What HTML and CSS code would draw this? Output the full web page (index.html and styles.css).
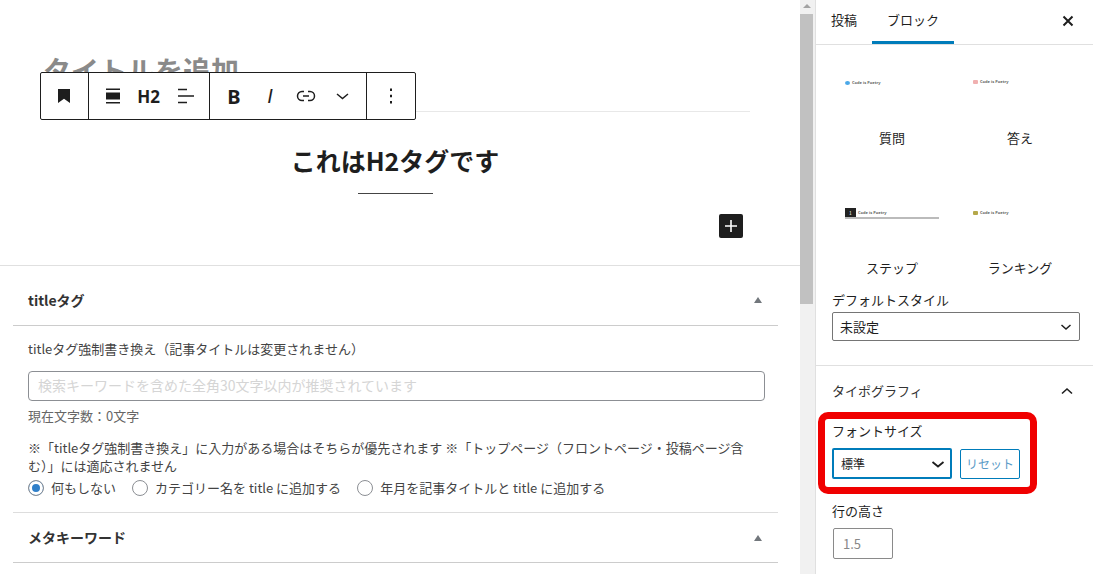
FILE: index.html
```html
<html>
<head>
  <title>投稿を編集</title>
  <link rel="stylesheet" href="styles.css">
</head>
<body>
  <div class="app">
    <div class="main">
      <div class="editor">
        <div class="post-title">タイトルを追加</div>
        <div class="toolbar">
          <div class="tool-group group-block">
            <svg width="24" height="24" viewBox="0 0 24 24"><path d="M6 5h12v14l-6-4.200L6 19z" fill="#1e1e1e"/></svg>
          </div>
          <div class="tool-group group-heading">
            <svg width="24" height="24" viewBox="0 0 24 24"><path d="M5 4.500h14V6H5zM5 8.500h14v7H5zM5 18h14v1.500H5z" fill="#1e1e1e"/></svg>
            <span class="tool-h2">H2</span>
            <svg width="24" height="24" viewBox="0 0 24 24"><path d="M4 4.800h9v1.500H4zM4 11.300h16v1.500H4zM4 17.800h9v1.500H4z" fill="#1e1e1e"/></svg>
          </div>
          <div class="tool-group group-format">
            <span class="tool-bold">B</span>
            <span class="tool-italic">I</span>
            <svg width="24" height="24" viewBox="0 0 24 24"><path d="M10 7.500H8a4.500 4.500 0 0 0 0 9h2M14 7.500h2a4.500 4.500 0 0 1 0 9h-2M9 12h6" fill="none" stroke="#1e1e1e" stroke-width="1.500"/></svg>
            <svg width="24" height="24" viewBox="0 0 24 24"><path d="M7 10l5.500 4.500L18 10" fill="none" stroke="#1e1e1e" stroke-width="1.500"/></svg>
          </div>
          <div class="tool-group group-more">
            <svg width="24" height="24" viewBox="0 0 24 24"><path d="M11 4.500h2v2.400h-2zM11 10.800h2v2.400h-2zM11 17.100h2v2.400h-2z" fill="#1e1e1e"/></svg>
          </div>
        </div>
        <div class="heading-block">
          <h2>これはH2タグです</h2>
          <div class="heading-rule"></div>
        </div>
        <div class="add-row">
          <div class="add-btn">
            <svg width="24" height="24" viewBox="0 0 24 24"><path d="M11.200 6h1.600v5.200H18v1.600h-5.200V18h-1.600v-5.200H6v-1.600h5.200z" fill="#fff"/></svg>
          </div>
        </div>
      </div>

      <div class="metabox">
        <div class="meta-head meta-head-1">
          <span class="meta-title">titleタグ</span>
          <span class="meta-arrow"></span>
        </div>
        <div class="meta-body">
          <div class="meta-label">titleタグ強制書き換え（記事タイトルは変更されません）</div>
          <div class="meta-input">検索キーワードを含めた全角30文字以内が推奨されています</div>
          <div class="meta-count">現在文字数：0文字</div>
          <div class="meta-note">※「titleタグ強制書き換え」に入力がある場合はそちらが優先されます ※「トップページ（フロントページ・投稿ページ含む）」には適応されません</div>
          <div class="radio-row">
            <span class="radio-item"><span class="radio checked"></span>何もしない</span>
            <span class="radio-item"><span class="radio"></span>カテゴリー名を title に追加する</span>
            <span class="radio-item"><span class="radio"></span>年月を記事タイトルと title に追加する</span>
          </div>
        </div>
        <div class="meta-head meta-head-2">
          <span class="meta-title">メタキーワード</span>
          <span class="meta-arrow"></span>
        </div>
      </div>
    </div>

    <div class="scrollbar">
      <div class="scroll-btn"></div>
      <div class="scroll-thumb"></div>
    </div>

    <div class="sidebar">
      <div class="tabs">
        <span class="tab tab-post">投稿</span>
        <span class="tab tab-block">ブロック</span>
        <svg class="tab-close" width="24" height="24" viewBox="0 0 24 24"><path d="M7.500 7.500l9 9M16.500 7.500l-9 9" fill="none" stroke="#1e1e1e" stroke-width="2"/></svg>
      </div>

      <div class="style-panel">
        <div class="style-grid">
          <div class="style-item">
            <div class="style-preview"><span class="mini-icon mini-blue"></span><span class="mini-text">Code is Poetry</span></div>
            <div class="style-name">質問</div>
          </div>
          <div class="style-item">
            <div class="style-preview preview-a"><span class="mini-icon mini-pink"></span><span class="mini-text">Code is Poetry</span></div>
            <div class="style-name">答え</div>
          </div>
          <div class="style-item">
            <div class="style-preview preview-step"><span class="mini-step">1</span><span class="mini-text">Code is Poetry</span></div>
            <div class="style-name">ステップ</div>
          </div>
          <div class="style-item">
            <div class="style-preview preview-rank"><span class="mini-icon mini-gold"></span><span class="mini-text">Code is Poetry</span></div>
            <div class="style-name">ランキング</div>
          </div>
        </div>
        <div class="field-label">デフォルトスタイル</div>
        <div class="select select-default">
          <span>未設定</span>
          <svg width="16" height="16" viewBox="0 0 16 16"><path d="M3.500 6l4.500 4 4.500-4" fill="none" stroke="#1e1e1e" stroke-width="1.500"/></svg>
        </div>
      </div>

      <div class="type-panel">
        <div class="type-head">
          <span>タイポグラフィ</span>
          <svg width="24" height="24" viewBox="0 0 24 24"><path d="M7 14.500l5-4.500 5 4.500" fill="none" stroke="#1e1e1e" stroke-width="1.600"/></svg>
        </div>
        <div class="field-label size-label">フォントサイズ</div>
        <div class="size-row">
          <div class="select select-size">
            <span>標準</span>
            <svg width="20" height="20" viewBox="0 0 20 20"><path d="M4.500 8l5.500 4.500L15.500 8" fill="none" stroke="#1e1e1e" stroke-width="1.800"/></svg>
          </div>
          <div class="reset-btn">リセット</div>
        </div>
        <div class="field-label height-label">行の高さ</div>
        <div class="number-input">1.5</div>
        <div class="highlight"></div>
      </div>
    </div>
  </div>
</body>
</html>
```

FILE: styles.css
```css
html, body {
  margin: 0;
  height: 100%;
  overflow: hidden;
}

body {
  background: white;
  color: #1e1e1e;
  font-family: "Noto Sans CJK JP", "Noto Sans", sans-serif;
  font-size: 13px;
}

.app {
  display: flex;
  width: 1093px;
  height: 574px;
  overflow: hidden;
}

/* editor side */
.main {
  width: 800px;
  flex-shrink: 0;
}

.editor {
  position: relative;
  height: 265px;
  border-bottom: 1px solid #e0e0e0;
}

.post-title {
  height: 59px;
  margin: 0 50px 0 40px;
  padding: 52px 0 0 3px;
  border-bottom: 1px solid #e8e8e8;
  font-size: 28px;
  font-weight: 700;
  line-height: 36px;
  color: #8a8a8a;
}

.toolbar {
  position: absolute;
  left: 40px;
  top: 72px;
  display: flex;
  height: 48px;
  box-sizing: border-box;
  background: white;
  border: 1px solid #1e1e1e;
  border-radius: 2px;
}

.tool-group {
  display: flex;
  align-items: center;
  box-sizing: border-box;
  border-right: 1px solid #1e1e1e;
}

.tool-group:last-child {
  border-right: none;
}

.group-block {
  width: 48px;
  justify-content: center;
}

.group-block svg {
  margin-right: 1px;
}

.group-heading {
  width: 121px;
  padding-left: 12px;
  gap: 12px;
}

.group-format {
  width: 157px;
  padding-left: 6px;
}

.group-format > * {
  width: 36px;
  text-align: center;
  flex-shrink: 0;
}

.group-format svg {
  width: 24px;
  margin: 0 6px;
}

.group-more {
  width: 48px;
  justify-content: center;
}

.tool-h2 {
  font-family: "Noto Sans", sans-serif;
  font-size: 17px;
  font-weight: 700;
  width: 27px;
  margin-left: -2px;
  text-align: center;
}

.tool-bold {
  font-family: "Noto Sans", sans-serif;
  font-size: 20px;
  font-weight: 700;
}

.tool-italic {
  font-family: "Liberation Sans", sans-serif;
  font-size: 20px;
  font-style: italic;
}

.heading-block {
  text-align: center;
  padding: 30px 0 0 0;
  width: 790px;
}

.heading-block h2 {
  margin: 0;
  font-size: 25px;
  font-weight: 700;
  line-height: 36px;
}

.heading-rule {
  width: 75px;
  height: 1px;
  background: #444;
  margin: 15px auto 0;
}

.add-row {
  display: flex;
  justify-content: flex-end;
  padding: 20px 57px 0 0;
}

.add-btn {
  width: 24px;
  height: 24px;
  background: #1e1e1e;
  border-radius: 2px;
}

.metabox {
  margin: 0 22px 0 13px;
  color: #444;
}

.meta-head {
  display: flex;
  justify-content: space-between;
  align-items: center;
  padding: 0 16px 0 15px;
  border-bottom: 1px solid #ccc;
}

.meta-head-1 {
  height: 51px;
  padding-top: 8px;
}

.meta-head-2 {
  height: 49px;
}

.meta-head-2 .meta-title {
  margin-top: -2px;
}

.meta-title {
  font-size: 14px;
  font-weight: 700;
  color: #333;
}

.meta-arrow {
  width: 0;
  height: 0;
  border-left: 4.500px solid transparent;
  border-right: 4.500px solid transparent;
  border-bottom: 6px solid #72777c;
}

.meta-body {
  padding: 13px 13px 0 15px;
  height: 173px;
  border-bottom: 1px solid #ddd;
}

.meta-label {
  line-height: 20px;
}

.meta-input {
  height: 30px;
  box-sizing: border-box;
  width: 737px;
  margin-top: 12px;
  padding-left: 9px;
  border: 1px solid #8c8f94;
  border-radius: 4px;
  color: #d5d5d5;
  font-size: 14px;
  line-height: 26px;
}

.meta-count {
  margin-top: 5px;
  line-height: 20px;
  color: #666;
}

.meta-note {
  margin-top: 13px;
  line-height: 18px;
  width: 725px;
}

.radio-row {
  display: flex;
  gap: 16px;
  margin-top: 3px;
  line-height: 20px;
}

.radio-item {
  display: flex;
  align-items: center;
  gap: 7px;
}

.radio {
  width: 16px;
  height: 16px;
  box-sizing: border-box;
  border: 1px solid #8c8f94;
  border-radius: 50%;
  background: white;
}

.radio.checked {
  box-shadow: inset 0 0 0 3px white;
  background: #2f7fc9;
}

/* scrollbar */
.scrollbar {
  width: 15px;
  flex-shrink: 0;
  background: #f1f1f1;
}

.scroll-btn {
  height: 14px;
  position: relative;
}

.scroll-btn::after {
  content: "";
  display: block;
  width: 0;
  margin: 0 auto;
  position: relative;
  top: 4px;
  left: -1px;
  border-left: 4px solid transparent;
  border-right: 4px solid transparent;
  border-bottom: 4px solid #a3a3a3;
}

.scroll-thumb {
  width: 13px;
  height: 290px;
  background: #c1c1c1;
}

/* sidebar */
.sidebar {
  flex: 1;
  border-left: 1px solid #e0e0e0;
  min-width: 0;
}

.tabs {
  position: relative;
  display: flex;
  height: 45px;
  box-sizing: border-box;
  border-bottom: 1px solid #e0e0e0;
}

.tab {
  font-size: 13px;
  line-height: 40px;
  text-align: center;
}

.tab-post {
  width: 56px;
}

.tab-block {
  width: 82px;
  height: 44px;
  box-sizing: border-box;
  border-bottom: 3px solid #007cba;
}

.tab-close {
  position: absolute;
  left: 240px;
  top: 9px;
}

.style-panel {
  height: 321px;
  padding: 0 13px 0 16px;
  box-sizing: border-box;
  border-bottom: 1px solid #e0e0e0;
}

.style-grid {
  display: grid;
  grid-template-columns: 128px 128px;
  grid-auto-rows: 130px;
  margin-left: -4px;
  padding-top: 5px;
  height: 240px;
}

.style-preview {
  display: flex;
  align-items: center;
  gap: 2px;
  height: 65px;
  padding-left: 17px;
  box-sizing: border-box;
}

.preview-a {
  padding-bottom: 1px;
}

.preview-step {
  position: relative;
}

.preview-step::after {
  content: "";
  position: absolute;
  left: 17px;
  top: 37px;
  width: 94px;
  height: 2px;
  background: #bbb;
}

.mini-icon {
  width: 5px;
  height: 4px;
  border-radius: 50%;
  flex-shrink: 0;
}

.mini-blue {
  background: #4aa8e8;
}

.mini-pink {
  background: #f0b0b0;
  border-radius: 1px;
}

.mini-gold {
  background: #b5a84a;
  border-radius: 1px;
}

.mini-step {
  width: 11px;
  height: 9px;
  margin-bottom: 1px;
  background: #222;
  color: white;
  font-size: 5px;
  line-height: 9px;
  text-align: center;
}

.mini-text {
  font-family: "Noto Sans", sans-serif;
  font-size: 4px;
  font-weight: 700;
  line-height: 6px;
  color: #666;
}

.style-name {
  text-align: center;
  font-size: 13px;
  line-height: 20px;
  margin-top: 13px;
  width: 128px;
}

.field-label {
  font-size: 13px;
  line-height: 20px;
}

.select {
  display: flex;
  justify-content: space-between;
  align-items: center;
  box-sizing: border-box;
  background: white;
  border-radius: 2px;
}

.select-default {
  width: 248px;
  height: 29px;
  margin-top: 2px;
  padding: 0 5px 0 7px;
  border: 1px solid #757575;
}

.type-panel {
  position: relative;
  padding: 0 13px 0 16px;
}

.type-head {
  display: flex;
  justify-content: space-between;
  align-items: center;
  height: 49px;
  padding-right: 1px;
  font-size: 13px;
  color: #333;
}

.size-label {
  margin-top: 6px;
}

.size-row {
  display: flex;
  gap: 8px;
  margin-top: 7px;
}

.select-size {
  width: 120px;
  height: 31px;
  padding: 0 2px 0 7px;
  border: 2px solid #007cba;
  font-size: 12px;
}

.reset-btn {
  width: 60px;
  height: 30px;
  margin-top: 1px;
  box-sizing: border-box;
  border: 1px solid #007cba;
  border-radius: 2px;
  font-size: 12px;
  line-height: 28px;
  text-align: center;
  color: #5b9bc7;
}

.height-label {
  margin-top: 22px;
}

.number-input {
  width: 60px;
  height: 31px;
  margin: 7px 0 0 1px;
  padding-left: 9px;
  box-sizing: border-box;
  border: 1px solid #8a8a8a;
  border-radius: 2px;
  line-height: 30px;
  color: #888;
}

/* red marker drawn over the screenshot */
.highlight {
  position: absolute;
  left: 2px;
  top: 46px;
  width: 219px;
  height: 82px;
  box-sizing: border-box;
  border: 7px solid #f00000;
  border-radius: 10px;
}
```
